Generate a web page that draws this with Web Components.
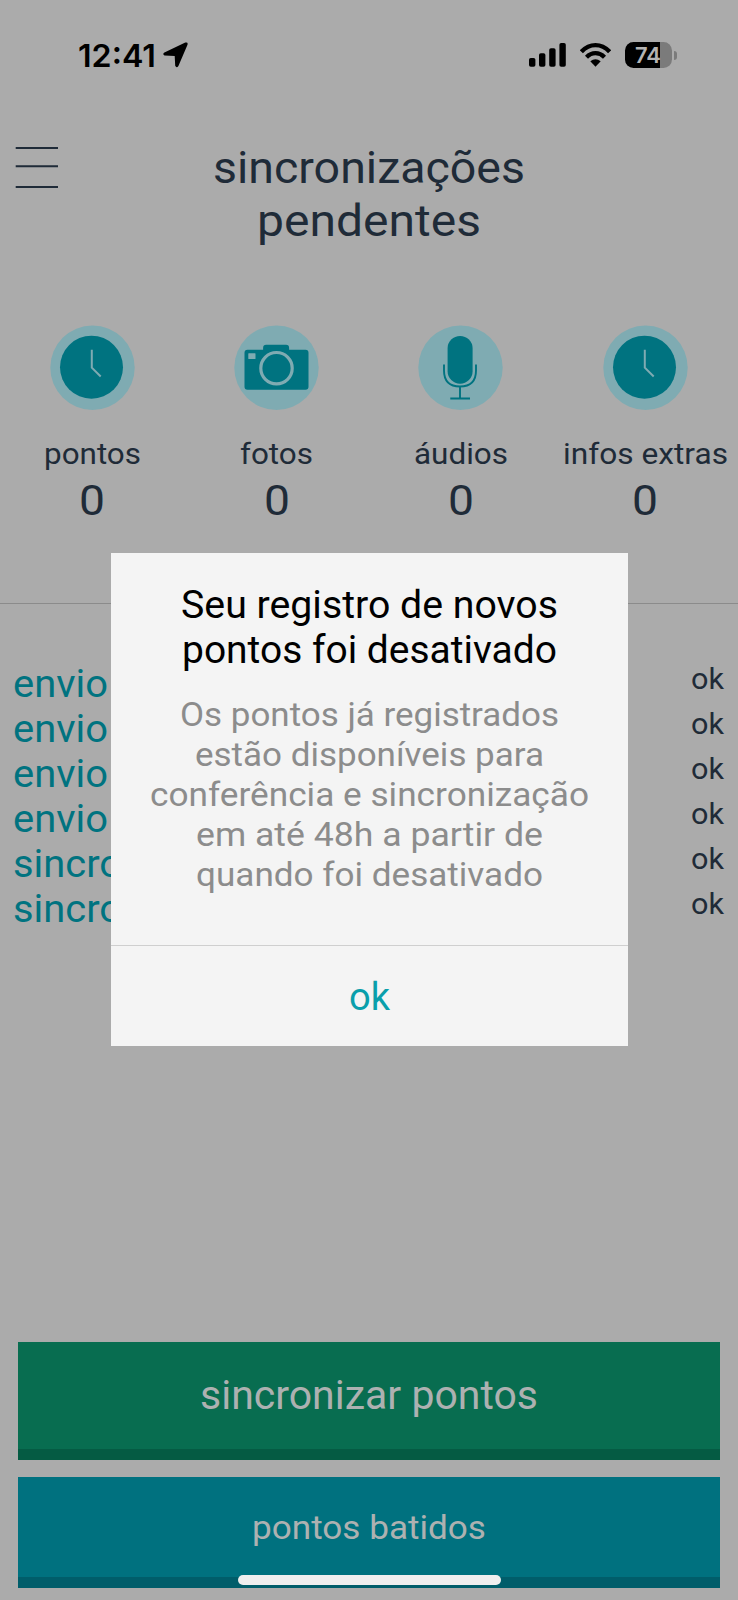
<!DOCTYPE html>
<html lang="pt-BR">
<head>
<meta charset="utf-8">
<title>sincronizações pendentes</title>
<style>
html,body{margin:0;padding:0;background:#ababab}
body{width:738px;height:1600px;overflow:hidden;font-family:Roboto,"Liberation Sans",sans-serif;color:#1f2b38}
</style>
</head>
<body>
<sync-screen></sync-screen>
<script>
const define = (name, html, ready) => customElements.define(name, class extends HTMLElement {
  connectedCallback() {
    if (this.shadowRoot) return;
    const t = document.createElement('template');
    t.innerHTML = html;
    this.attachShadow({ mode: 'open' }).appendChild(t.content.cloneNode(true));
    if (ready) ready.call(this, this.shadowRoot);
  }
});

// One line of text whose letters are widened to the measure given in "w".
define('fit-line', `<style>
:host{display:block;white-space:nowrap;flex:none;text-align:left}
span{display:inline-block;transform-origin:0 50%}
</style><span><slot></slot></span>`, function (root) {
  const w = +this.getAttribute('w'), span = root.querySelector('span');
  const natural = span.getBoundingClientRect().width;
  this.style.width = w + 'px';
  if (natural) span.style.transform = `scaleX(${w / natural})`;
});

define('status-bar', `<style>
:host{display:flex;height:110px;box-sizing:border-box;padding:38px 61px 0 77.5px;justify-content:space-between;color:#000;font-family:Inter,sans-serif}
.l,.r{display:flex;height:34px;align-items:center}
.time{font-size:31.5px;font-weight:600;line-height:34px;padding-top:1px}
.loc{margin-left:7.5px}
svg{display:block}
.wifi{margin:0 14px}
.bat{width:47px;height:26px;border-radius:8.5px;background:linear-gradient(90deg,#000 35px,#7b7b7b 35px);color:#b4b4b4;display:flex;align-items:center;padding-left:9.5px;box-sizing:border-box;font-size:22px;font-weight:600;line-height:26px}
.cap{width:3px;height:9px;margin-left:2px;border-radius:0 4px 4px 0;background:#7b7b7b}
</style>
<div class="l"><fit-line class="time" w="78">12:41</fit-line>
<svg class="loc" width="25" height="26" viewBox="0 0 25 26"><path d="M1.4 10.5 22.3.6Q25.4-.3 24.4 3L15.4 23.9Q13.6 26.4 12.2 23.8L11.7 14 1.5 13.4Q-.9 11.9 1.4 10.5Z"/></svg></div>
<div class="r"><svg width="37" height="26" viewBox="0 0 37 26"><rect y="16" width="6.4" height="8.8" rx="1.8"/><rect x="10" y="11.3" width="6.4" height="13.5" rx="1.8"/><rect x="20.2" y="6.2" width="6.4" height="18.6" rx="1.8"/><rect x="30.4" y="1" width="6.4" height="23.8" rx="1.8"/></svg>
<svg class="wifi" width="31" height="26" viewBox="0 0 31 26"><g fill="none" stroke="#000" stroke-width="4.3"><path d="M1.4 9.7Q7.6 3.1 15.5 3.1T29.6 9.7"/><path d="M6.5 15.2Q10.5 11.2 15.5 11.2T24.5 15.2"/></g><path d="M10.3 19.3Q15.5 15.4 20.7 19.3L15.5 24.8Z"/></svg>
<div class="bat"><fit-line w="26">74</fit-line></div><i class="cap"></i></div>`);

define('page-header', `<style>
:host{display:grid;grid-template-columns:1fr auto 1fr;padding-top:31.2px;height:184.8px;box-sizing:content-box;font-size:45px;line-height:53px}
h1{margin:0;font:inherit;display:flex;flex-direction:column;align-items:center}
svg{display:block;margin:4.8px 0 0 15px}
</style>
<svg width="44" height="44" viewBox="0 0 44 44" stroke="#1f2b38" stroke-width="1.9"><path d="M.7 2H43M.7 20.3H43M.7 41H43"/></svg>
<h1><fit-line w="312">sincronizações</fit-line><fit-line w="224">pendentes</fit-line></h1><span></span>`);

const face = {
  clock: '<circle cx="41" cy="41.2" r="31.5" fill="#007380"/><path d="M41.3 23.7V41.7L50.2 50.5" fill="none" stroke="#7fabb2" stroke-width="2"/>',
  camera: '<path fill="#007380" d="M13 23.7H28.6V22Q28.6 18.7 31.6 18.7H51.6Q54.6 18.7 54.6 22V23.7H71Q74 23.7 74 26.7V60.7Q74 63.7 71 63.7H13Q10 63.7 10 60.7V26.7Q10 23.7 13 23.7Z"/><circle cx="42" cy="42.2" r="15.7" fill="none" stroke="#7fabb2" stroke-width="3.2"/><rect x="13.8" y="27.2" width="7.2" height="5.8" rx=".6" fill="#7fabb2"/>',
  mic: '<rect x="29.1" y="9.9" width="25" height="47.8" rx="12.5" fill="#007380"/><path d="M25.5 38.5V44.5Q25.5 60.5 41.5 60.5T57.5 44.5V38.5M41.5 60.5V72.5M31.8 72.5H51.5" fill="none" stroke="#007380" stroke-width="1.9"/>'
};
define('stat-card', `<style>
:host{display:flex;flex-direction:column;align-items:center}
svg{display:block;margin-bottom:27.4px;overflow:visible}
.name{font-size:29.5px;line-height:34px;margin-bottom:5px}
.num{font-size:42.5px;line-height:50px}
</style><svg width="85" height="84" viewBox="0 0 84 84"><circle cx="42" cy="41.7" r="42.2" fill="#7fabb2"/><g></g></svg>
<fit-line class="name"></fit-line><fit-line class="num" w="26">0</fit-line>`, function (root) {
  root.querySelector('g').innerHTML = face[this.getAttribute('icon')];
  const n = root.querySelector('.name'), w = this.getAttribute('w');
  n.textContent = this.getAttribute('name');
  const s = n.shadowRoot.querySelector('span');
  s.style.transform = 'none';
  const natural = s.getBoundingClientRect().width;
  n.style.width = w + 'px';
  s.style.transform = `scaleX(${w / natural})`;
});

define('log-row', `<style>
:host{display:flex;justify-content:space-between;height:45px;padding:0 14px 0 13px;color:#007380;font-size:38px;line-height:45px}
.ok{font-size:29.5px;line-height:35px;color:#1f2b38}
</style><slot></slot><fit-line class="ok" w="33">ok</fit-line>`);

define('action-button', `<style>
:host{display:flex;justify-content:center;align-items:center;box-sizing:border-box;margin:0 18.5px 0 18px;color:#adb1b1}
:host([kind=sync]){height:118px;background:#086d50;border-bottom:11px solid #055b43;font-size:40px;margin-bottom:17px}
:host([kind=list]){height:111px;background:#00717f;border-bottom:11px solid #005d6a;font-size:34px}
</style><slot></slot>`);

define('alert-dialog', `<style>
:host{position:absolute;inset:0;display:flex;align-items:center;justify-content:center}
section{width:517px;height:493px;box-sizing:border-box;background:#f4f4f4;display:flex;flex-direction:column;margin:-1px 0 0 0}
.t,.b{display:flex;flex-direction:column;align-items:center}
.t{padding-top:29.5px;font-size:38px;line-height:45px;color:#000}
.b{margin-top:21px;font-size:34px;line-height:40.1px;color:#8c8c8c}
.f{margin-top:auto;height:101.5px;box-sizing:border-box;border-top:1px solid #cfcfcf;padding-top:2px;display:flex;align-items:center;justify-content:center;color:#0a9fab;font-size:38px}
</style><section><div class="t"><slot name="title"></slot></div><div class="b"><slot></slot></div><div class="f"><slot name="action"></slot></div></section>`);

define('home-indicator', `<style>:host{position:absolute;left:238px;bottom:15px;width:263px;height:10px;border-radius:5px;background:#efefef}</style>`);

define('sync-screen', `<style>
:host{display:flex;flex-direction:column;position:relative;width:738px;height:1600px;background:#ababab;overflow:hidden}
.stats{display:grid;grid-template-columns:repeat(4,184.4px);height:277px}
.logs{border-top:1px solid #8b8b8b;padding-top:58px;flex:1}
.actions{padding-bottom:12px}
</style>
<status-bar></status-bar>
<page-header></page-header>
<div class="stats">
<stat-card icon="clock" name="pontos" w="97"></stat-card><stat-card icon="camera" name="fotos" w="73"></stat-card><stat-card icon="mic" name="áudios" w="94"></stat-card><stat-card icon="clock" name="infos extras" w="165"></stat-card>
</div>
<div class="logs">
<log-row><fit-line w="95">envio</fit-line></log-row><log-row><fit-line w="95">envio</fit-line></log-row><log-row><fit-line w="95">envio</fit-line></log-row><log-row><fit-line w="95">envio</fit-line></log-row><log-row><fit-line w="109">sincro</fit-line></log-row><log-row><fit-line w="109">sincro</fit-line></log-row>
</div>
<div class="actions"><action-button kind="sync"><fit-line w="338">sincronizar pontos</fit-line></action-button><action-button kind="list"><fit-line w="234">pontos batidos</fit-line></action-button></div>
<alert-dialog>
<fit-line slot="title" w="377">Seu registro de novos</fit-line><fit-line slot="title" w="375">pontos foi desativado</fit-line>
<fit-line w="379">Os pontos já registrados</fit-line><fit-line w="349">estão disponíveis para</fit-line><fit-line w="439">conferência e sincronização</fit-line><fit-line w="347">em até 48h a partir de</fit-line><fit-line w="347">quando foi desativado</fit-line>
<fit-line slot="action" w="41">ok</fit-line>
</alert-dialog>
<home-indicator></home-indicator>`);
</script>
</body>
</html>
